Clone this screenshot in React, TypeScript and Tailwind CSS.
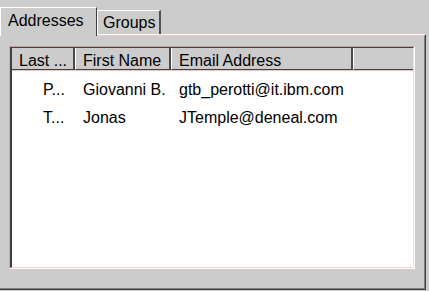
import React from "react";

const font = { fontFamily: '"Liberation Sans", Arial, sans-serif' };

export default function App() {
  return (
    <div
      className="w-[429px] h-[291px] bg-[#cccccc] overflow-hidden text-[16px] text-black"
      style={font}
    >
      {/* tab strip */}
      <div className="flex items-end h-[34px]">
        <div className="relative z-10 w-[97px] h-[29px] -mb-[2px] bg-[#cccccc] border-t border-l border-r border-t-white border-l-white border-r-[#404040] pl-[7px] pt-[3px] leading-[19px]">
          Addresses
        </div>
        <div className="w-[64px] h-[24px] border-t border-l border-r-2 border-t-white border-l-white border-r-[#505050] pl-[5px] pt-[2px] leading-[19px]">
          Groups
        </div>
      </div>

      {/* pane */}
      <div className="w-[426px] h-[256px] border-t border-r border-b border-t-white border-r-[#404040] border-b-[#404040]">
        <div className="h-full border-t border-r border-b border-t-[#f0c4c4] border-r-[#808080] border-b-[#808080] pt-[10px] pl-[9px]">
          {/* list view */}
          <div className="w-[406px] h-[223px] border-t border-l border-r border-b border-t-[#c8a0a0] border-l-[#d8a8a8] border-r-white border-b-white">
            <div className="h-full flex flex-col border-t border-l-2 border-r border-b border-t-[#404040] border-l-[#404040] border-r-[#e4e4e4] border-b-[#ffcccc] bg-white">
              {/* header */}
              <div className="flex h-[23px] bg-[#cccccc] border-b border-b-[#f0c4c4]">
                <div className="w-[63px] h-[22px] flex items-end border-r-2 border-b border-r-[#4a4a4a] border-b-[#404040] pl-[7px] leading-[16px]">
                  Last ...
                </div>
                <div className="w-[96px] h-[22px] flex items-end border-l border-r-2 border-b border-l-white border-r-[#4a4a4a] border-b-[#404040] pl-[7px] leading-[16px]">
                  First Name
                </div>
                <div className="w-[182px] h-[22px] flex items-end border-l border-r-2 border-b border-l-white border-r-[#4a4a4a] border-b-[#404040] pl-[7px] leading-[16px]">
                  Email Address
                </div>
                <div className="flex-1 h-[22px] border-l border-b border-l-white border-b-[#404040]" />
              </div>
              {/* rows */}
              <div className="pt-[5px]">
                {[
                  ["P...", "Giovanni B.", "gtb_perotti@it.ibm.com"],
                  ["T...", "Jonas", "JTemple@deneal.com"],
                ].map((r) => (
                  <div key={r[0]} className="flex h-[28px] leading-[27px] whitespace-nowrap">
                    <div className="w-[63px] pl-[31px]">{r[0]}</div>
                    <div className="w-[96px] pl-[8px]">{r[1]}</div>
                    <div className="w-[182px] pl-[8px]">{r[2]}</div>
                  </div>
                ))}
              </div>
            </div>
          </div>
        </div>
      </div>
    </div>
  );
}
